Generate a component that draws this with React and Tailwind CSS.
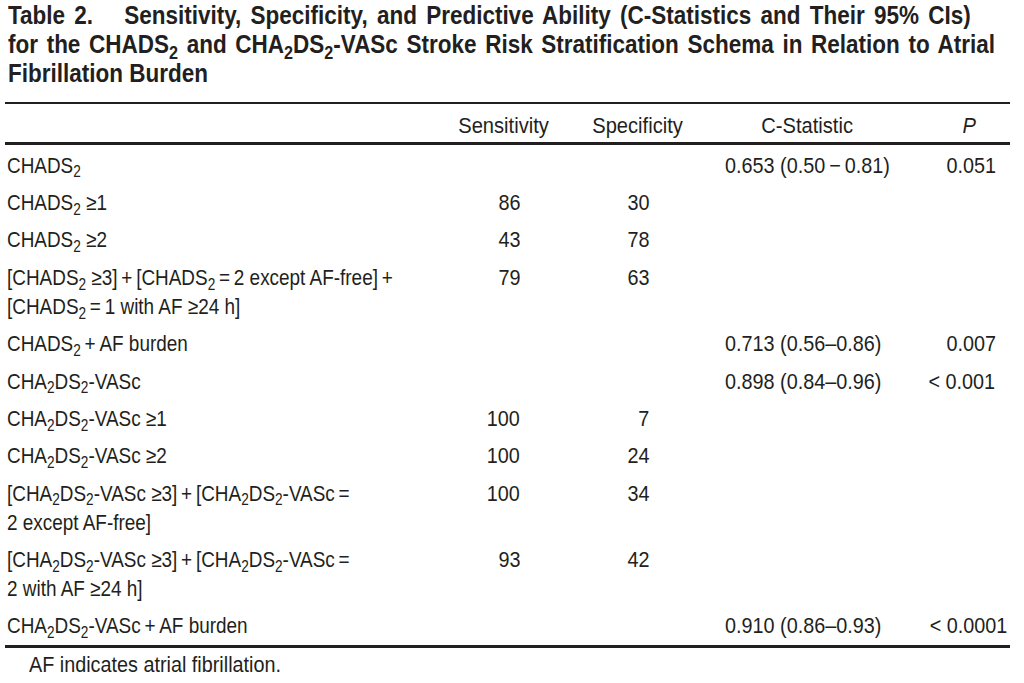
import React from "react";

const S = ({ children }) => <sub className="text-[0.72em] -bottom-[0.3em]">{children}</sub>;
const CHADS = () => (<>CHADS<S>2</S></>);
const CHA = () => (<>CHA<S>2</S>DS<S>2</S>-VASc</>);
const P = "\u2009+\u2009";
const E = "\u2009=\u2009";

const L = ({ children }) => (
  <span className="inline-block whitespace-nowrap origin-left scale-x-[0.86]">{children}</span>
);
const F = ({ children }) => (
  <span className="inline-block whitespace-nowrap origin-left scale-x-[0.9]">{children}</span>
);
const NR = ({ children }) => (
  <span className="inline-block whitespace-nowrap origin-right scale-x-[0.9]">{children}</span>
);
const NL = ({ children }) => (
  <span className="inline-block whitespace-nowrap origin-left scale-x-[0.9]">{children}</span>
);
const H = ({ children }) => (
  <span className="inline-block whitespace-nowrap origin-center scale-x-[0.915]">{children}</span>
);

const rows = [
  { l: [<><CHADS /></>], c: "0.653 (0.50\u2009\u2212\u20090.81)", p: "0.051", pp: "pr-[14px]" },
  { l: [<><CHADS /> ≥1</>], se: "86", sp: "30" },
  { l: [<><CHADS /> ≥2</>], se: "43", sp: "78" },
  { l: [<>[<CHADS /> ≥3]{P}[<CHADS />{E}2 except AF-free]{P}</>, <>[<CHADS />{E}1 with AF ≥24 h]</>], se: "79", sp: "63" },
  { l: [<><CHADS />{P}AF burden</>], c: "0.713 (0.56–0.86)", p: "0.007", pp: "pr-[14px]" },
  { l: [<><CHA /></>], c: "0.898 (0.84–0.96)", p: "<\u00a00.001", pp: "pr-[15px]" },
  { l: [<><CHA /> ≥1</>], se: "100", sp: "7" },
  { l: [<><CHA /> ≥2</>], se: "100", sp: "24" },
  { l: [<>[<CHA /> ≥3]{P}[<CHA />{E}</>, <>2 except AF-free]</>], se: "100", sp: "34" },
  { l: [<>[<CHA /> ≥3]{P}[<CHA />{E}</>, <>2 with AF ≥24 h]</>], se: "93", sp: "42" },
  { l: [<><CHA />{P}AF burden</>], c: "0.910 (0.86–0.93)", p: "<\u00a00.0001", pp: "pr-[3px]" },
];

export default function App() {
  return (
    <div className="w-[1024px] h-[683px] bg-white text-[#231f20] overflow-hidden" style={{ fontFamily: '"Liberation Sans", Arial, sans-serif' }}>
      <div className="pl-[8px] pt-[1px] font-bold text-[26px] leading-[29px]">
        <div className="w-[1113px] origin-left scale-x-[0.865] [text-align-last:justify] whitespace-nowrap">
          Table 2.<span className="inline-block w-[36px]" />Sensitivity, Specificity, and Predictive Ability (C-Statistics and Their 95% CIs)
        </div>
        <div className="w-[1141px] origin-left scale-x-[0.865] [text-align-last:justify] whitespace-nowrap">
          for the <CHADS /> and <CHA /> Stroke Risk Stratification Schema in Relation to Atrial
        </div>
        <div className="origin-left scale-x-[0.865] whitespace-nowrap">Fibrillation Burden</div>
      </div>
      <div className="ml-[5px] w-[1005px] mt-[14px] border-t-2 border-[#231f20] text-[22px]">
        <div className="flex h-[41px] items-center border-b-[3px] border-[#231f20] pt-[4px]">
          <div className="w-[435px]" />
          <div className="w-[125px] text-center pl-[2px]"><H>Sensitivity</H></div>
          <div className="w-[135px] text-center pl-[10px]"><H>Specificity</H></div>
          <div className="w-[205px] text-center pl-[9px]"><H>C-Statistic</H></div>
          <div className="flex-1 text-right pr-[33px] italic"><H>P</H></div>
        </div>
        <div className="pt-[1.5px]">
          {rows.map((r, i) => (
            <div key={i} className="flex py-[4.2px] leading-[29px]">
              <div className="w-[435px] pl-[2px]">
                {r.l.map((x, j) => (<div key={j}><L>{x}</L></div>))}
              </div>
              <div className="w-[125px] text-right pr-[45px]">{r.se && <NR>{r.se}</NR>}</div>
              <div className="w-[135px] text-right pr-[51px]">{r.sp && <NR>{r.sp}</NR>}</div>
              <div className="w-[205px] pl-[25px]">{r.c && <NL>{r.c}</NL>}</div>
              <div className={"flex-1 text-right " + (r.pp || "")}>{r.p && <NR>{r.p}</NR>}</div>
            </div>
          ))}
        </div>
        <div className="border-t-[3px] border-[#231f20] pl-[24px] pt-[2px] leading-[29px]">
          <F>AF indicates atrial fibrillation.</F>
        </div>
      </div>
    </div>
  );
}
